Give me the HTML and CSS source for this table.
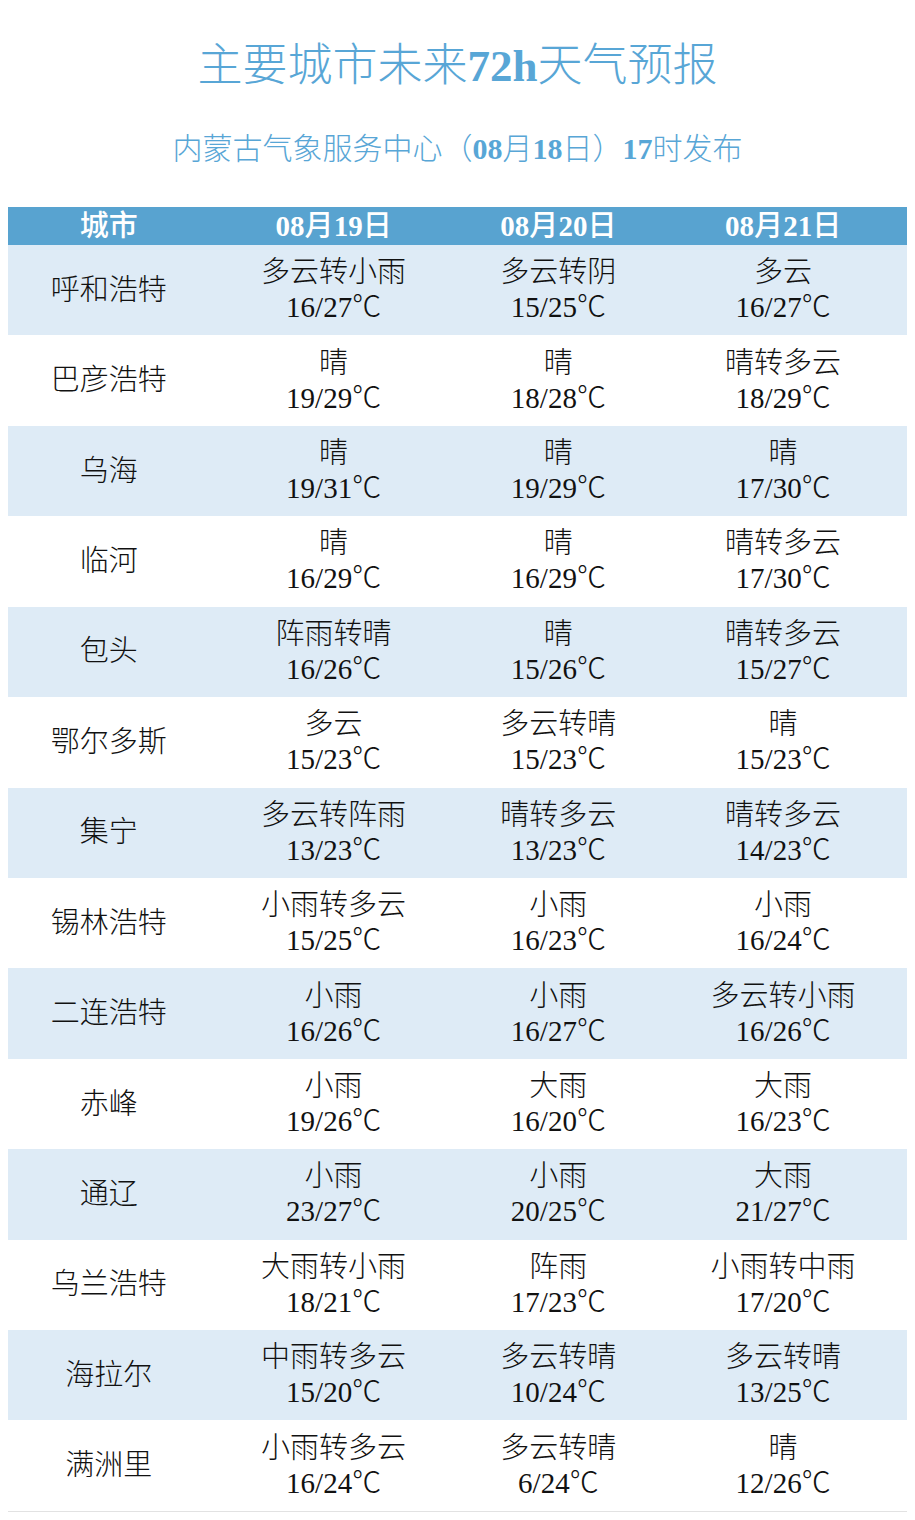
FILE: index.html
```html
<!DOCTYPE html>
<html lang="zh-CN">
<head>
<meta charset="utf-8">
<title>主要城市未来72h天气预报</title>
<link rel="stylesheet" href="styles.css">
</head>
<body>
<div class="page">
  <h1 class="title">主要城市未来<b>72h</b>天气预报</h1>
  <p class="subtitle">内蒙古气象服务中心（<b>08</b>月<b>18</b>日）<b>17</b>时发布</p>
  <div class="table">
    <div class="row head">
      <div class="cell">城市</div>
      <div class="cell"><b>08</b>月<b>19</b>日</div>
      <div class="cell"><b>08</b>月<b>20</b>日</div>
      <div class="cell"><b>08</b>月<b>21</b>日</div>
    </div>
    <div class="row alt"><div class="cell">呼和浩特</div><div class="cell"><span>多云转小雨</span><span>16/27℃</span></div><div class="cell"><span>多云转阴</span><span>15/25℃</span></div><div class="cell"><span>多云</span><span>16/27℃</span></div></div>
    <div class="row"><div class="cell">巴彦浩特</div><div class="cell"><span>晴</span><span>19/29℃</span></div><div class="cell"><span>晴</span><span>18/28℃</span></div><div class="cell"><span>晴转多云</span><span>18/29℃</span></div></div>
    <div class="row alt"><div class="cell">乌海</div><div class="cell"><span>晴</span><span>19/31℃</span></div><div class="cell"><span>晴</span><span>19/29℃</span></div><div class="cell"><span>晴</span><span>17/30℃</span></div></div>
    <div class="row"><div class="cell">临河</div><div class="cell"><span>晴</span><span>16/29℃</span></div><div class="cell"><span>晴</span><span>16/29℃</span></div><div class="cell"><span>晴转多云</span><span>17/30℃</span></div></div>
    <div class="row alt"><div class="cell">包头</div><div class="cell"><span>阵雨转晴</span><span>16/26℃</span></div><div class="cell"><span>晴</span><span>15/26℃</span></div><div class="cell"><span>晴转多云</span><span>15/27℃</span></div></div>
    <div class="row"><div class="cell">鄂尔多斯</div><div class="cell"><span>多云</span><span>15/23℃</span></div><div class="cell"><span>多云转晴</span><span>15/23℃</span></div><div class="cell"><span>晴</span><span>15/23℃</span></div></div>
    <div class="row alt"><div class="cell">集宁</div><div class="cell"><span>多云转阵雨</span><span>13/23℃</span></div><div class="cell"><span>晴转多云</span><span>13/23℃</span></div><div class="cell"><span>晴转多云</span><span>14/23℃</span></div></div>
    <div class="row"><div class="cell">锡林浩特</div><div class="cell"><span>小雨转多云</span><span>15/25℃</span></div><div class="cell"><span>小雨</span><span>16/23℃</span></div><div class="cell"><span>小雨</span><span>16/24℃</span></div></div>
    <div class="row alt"><div class="cell">二连浩特</div><div class="cell"><span>小雨</span><span>16/26℃</span></div><div class="cell"><span>小雨</span><span>16/27℃</span></div><div class="cell"><span>多云转小雨</span><span>16/26℃</span></div></div>
    <div class="row"><div class="cell">赤峰</div><div class="cell"><span>小雨</span><span>19/26℃</span></div><div class="cell"><span>大雨</span><span>16/20℃</span></div><div class="cell"><span>大雨</span><span>16/23℃</span></div></div>
    <div class="row alt"><div class="cell">通辽</div><div class="cell"><span>小雨</span><span>23/27℃</span></div><div class="cell"><span>小雨</span><span>20/25℃</span></div><div class="cell"><span>大雨</span><span>21/27℃</span></div></div>
    <div class="row"><div class="cell">乌兰浩特</div><div class="cell"><span>大雨转小雨</span><span>18/21℃</span></div><div class="cell"><span>阵雨</span><span>17/23℃</span></div><div class="cell"><span>小雨转中雨</span><span>17/20℃</span></div></div>
    <div class="row alt"><div class="cell">海拉尔</div><div class="cell"><span>中雨转多云</span><span>15/20℃</span></div><div class="cell"><span>多云转晴</span><span>10/24℃</span></div><div class="cell"><span>多云转晴</span><span>13/25℃</span></div></div>
    <div class="row last"><div class="cell">满洲里</div><div class="cell"><span>小雨转多云</span><span>16/24℃</span></div><div class="cell"><span>多云转晴</span><span>6/24℃</span></div><div class="cell"><span>晴</span><span>12/26℃</span></div></div>
  </div>
</div>
</body>
</html>
```

FILE: styles.css
```css
html, body {
  margin: 0;
  padding: 0;
  background: #ffffff;
}
body {
  font-family: "Liberation Serif", "Noto Sans CJK SC", serif;
  color: #111111;
}
.page {
  padding: 36px 8px 0 8px;
}
.title {
  margin: 0;
  height: 60px;
  line-height: 60px;
  font-size: 45px;
  font-weight: 300;
  color: #58a6d6;
  text-align: center;
}
.title b,
.subtitle b {
  font-weight: bold;
}
.subtitle {
  margin: 33px 0 0 0;
  height: 40px;
  line-height: 40px;
  font-size: 30px;
  font-weight: 300;
  color: #58a6d6;
  text-align: center;
}
.table {
  margin-top: 38px;
  display: flex;
  flex-direction: column;
}
.row {
  display: grid;
  grid-template-columns: repeat(4, 1fr);
  height: 90.43px;
  background: #ffffff;
}
.row.alt {
  background: #deebf6;
}
.row.last {
  border-bottom: 1px solid #e2e2e2;
}
.row.head {
  height: 38px;
  background: #58a3d0;
  color: #ffffff;
}
.cell {
  padding-right: 23px;
  display: flex;
  flex-direction: column;
  align-items: center;
  justify-content: center;
  font-size: 29px;
  line-height: 35px;
  font-weight: 300;
  text-align: center;
  white-space: nowrap;
}
.head .cell {
  flex-direction: row;
  font-size: 29px;
  line-height: 38px;
  font-weight: 500;
}
.head .cell b {
  font-weight: bold;
}
```
